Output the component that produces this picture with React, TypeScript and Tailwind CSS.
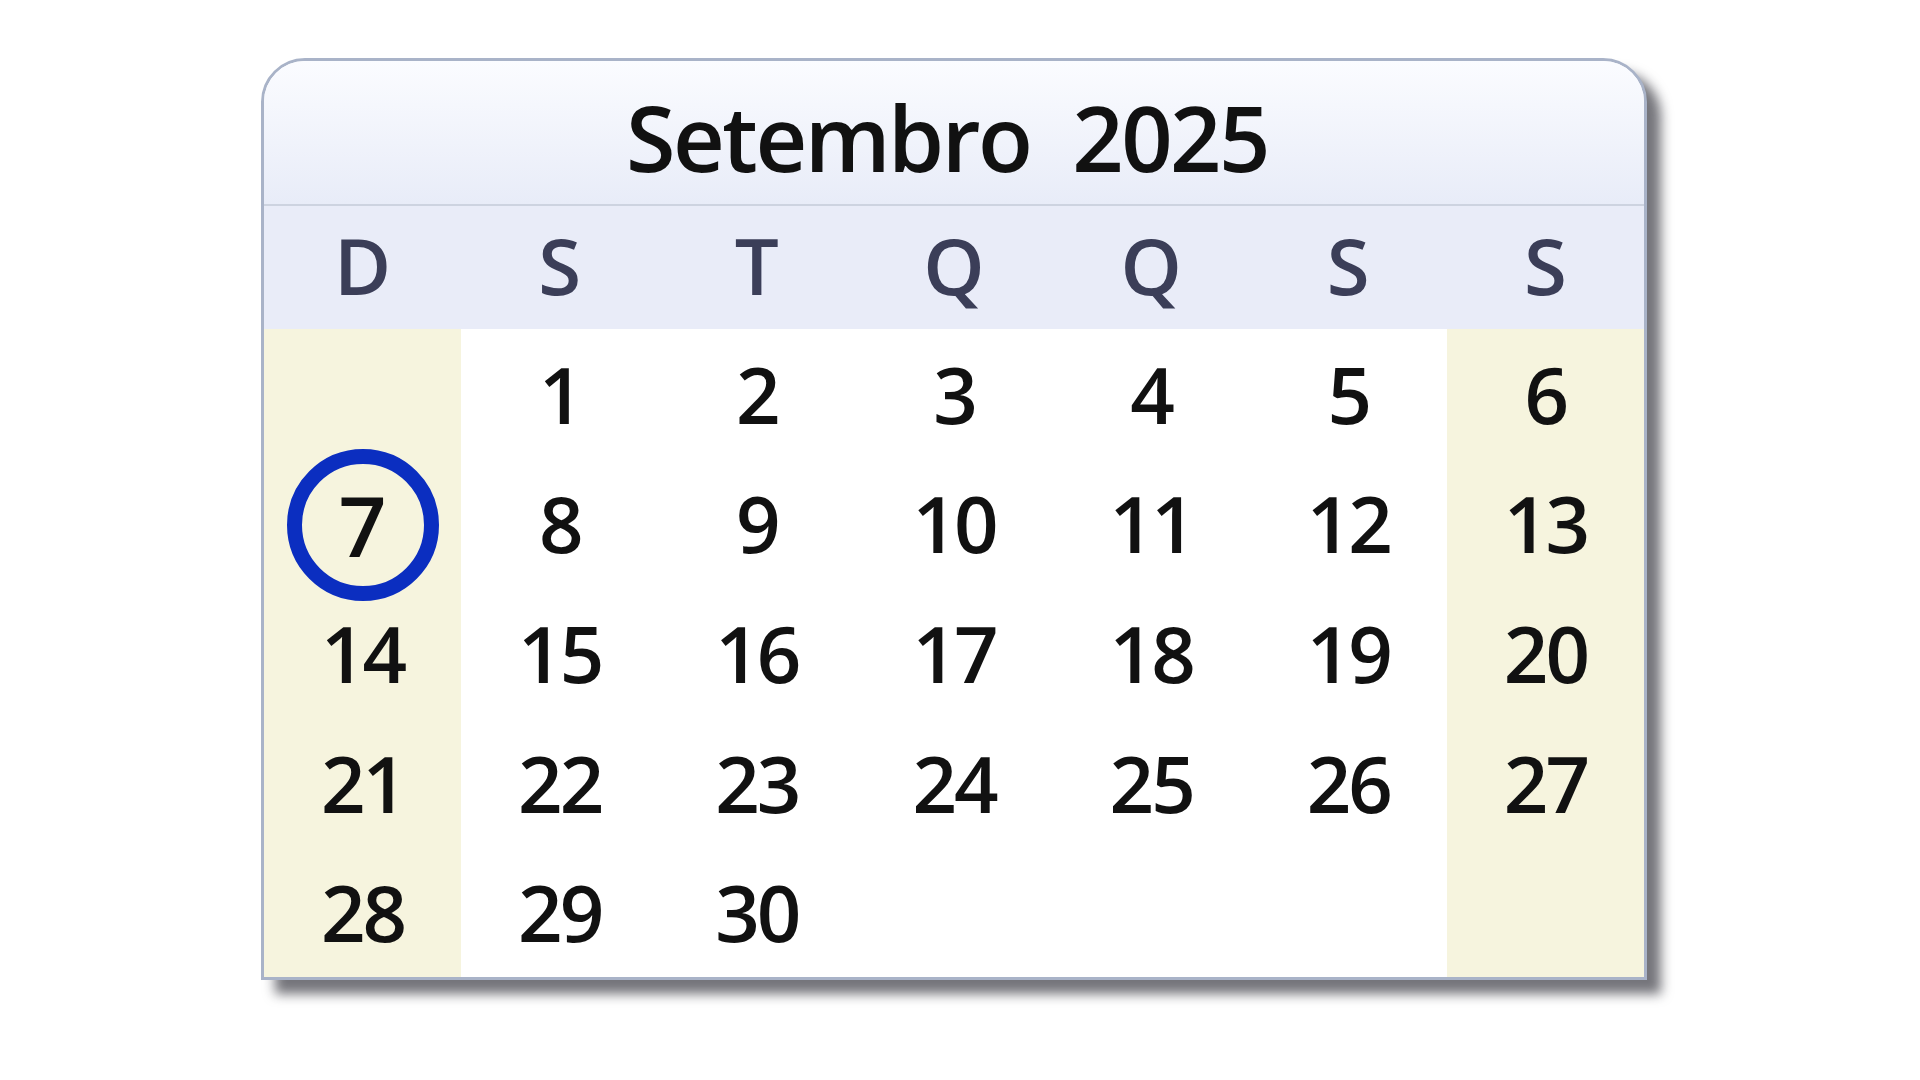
import React from "react";

const dows = ["D", "S", "T", "Q", "Q", "S", "S"];
const weeks: (number | null)[][] = [
  [null, 1, 2, 3, 4, 5, 6],
  [7, 8, 9, 10, 11, 12, 13],
  [14, 15, 16, 17, 18, 19, 20],
  [21, 22, 23, 24, 25, 26, 27],
  [28, 29, 30, null, null, null, null],
];

export default function App() {
  return (
    <div className="w-[1920px] h-[1080px] bg-white pl-[261px] pt-[58px] font-['Open_Sans',sans-serif] overflow-hidden">
      <div className="w-[1386px] h-[922px] border-[3px] border-[#a9b3c8] rounded-t-[44px] flex flex-col shadow-[14px_14px_12px_rgba(25,25,35,0.6)] bg-white">
        <div className="h-[143px] shrink-0 rounded-t-[41px] bg-gradient-to-b from-[#fbfcff] to-[#e8ecf8] flex items-center justify-center pr-[14px]">
          <span className="text-[90px] font-semibold text-[#111111] leading-none tracking-[-2.5px] pt-[8px] whitespace-pre">
            Setembro  2025
          </span>
        </div>
        <div className="h-[2px] shrink-0 bg-[#cdd3e0]" />
        <div className="h-[123px] shrink-0 bg-[#e9ecf8] grid grid-cols-7 items-center">
          {dows.map((d, i) => (
            <div key={i} className="text-center text-[78px] font-semibold leading-none text-[#3b3e58] pb-[6px]">
              {d}
            </div>
          ))}
        </div>
        <div className="flex-1 min-h-0 grid grid-cols-7 grid-rows-[repeat(5,minmax(0,1fr))]">
          {weeks.flatMap((w, r) =>
            w.map((n, c) => {
              const weekend = c === 0 || c === 6;
              return (
                <div
                  key={`${r}-${c}`}
                  className={`min-h-0 flex items-center justify-center ${weekend ? "bg-[#f6f4de]" : "bg-white"}`}
                >
                  {n === 7 ? (
                    <div className="relative z-10 shrink-0 w-[152px] h-[152px] rounded-full border-[15px] border-[#0b2ec0] flex items-center justify-center mt-[4px]">
                      <span className="text-[84px] font-semibold text-[#111111] leading-none">7</span>
                    </div>
                  ) : n !== null ? (
                    <span className="text-[78px] font-semibold text-[#111111] leading-none tracking-[-3px]">
                      {n}
                    </span>
                  ) : null}
                </div>
              );
            })
          )}
        </div>
      </div>
    </div>
  );
}
